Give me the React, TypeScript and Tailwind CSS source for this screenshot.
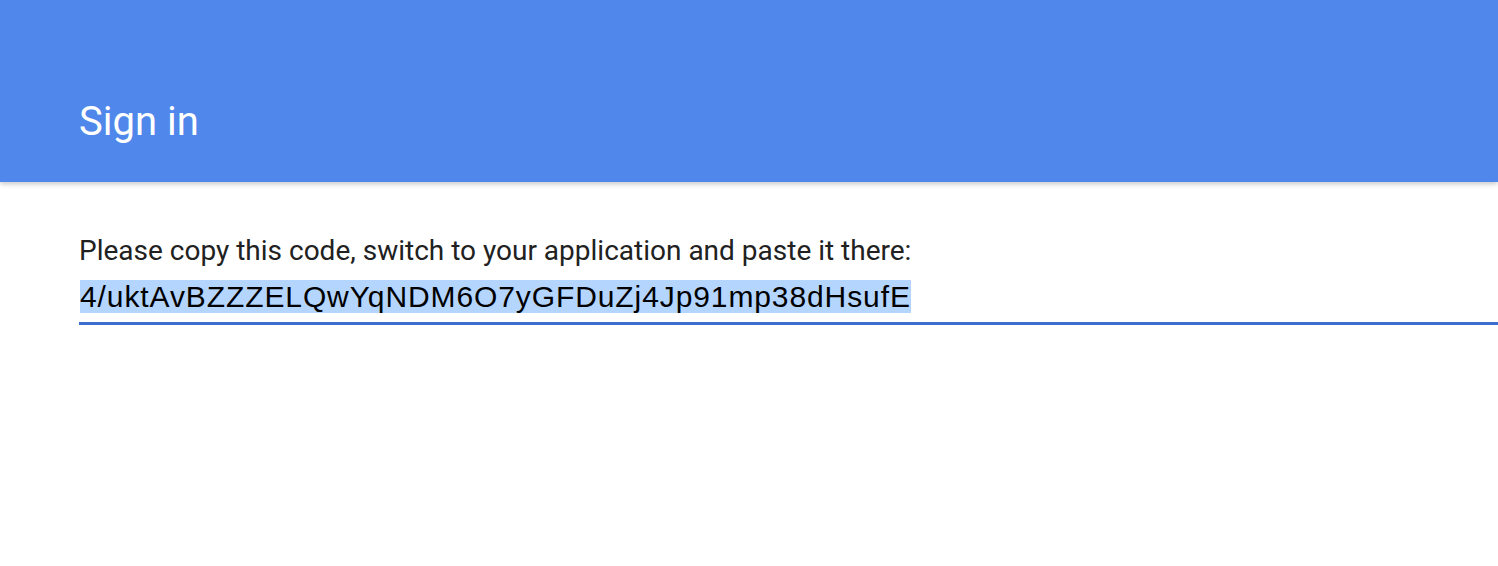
export default function App() {
  return (
    <div className="w-[1498px] h-[566px] bg-white overflow-hidden relative">
      <header className="relative z-10 h-[182px] bg-[#4f87eb] pl-[79px] pt-[102px] shadow-[0_2px_5px_rgba(0,0,0,0.22)]">
        <h1 className="text-white text-[40px] leading-[40px] font-normal" style={{ fontFamily: "Roboto, 'Noto Sans', sans-serif" }}>
          Sign in
        </h1>
      </header>
      <main className="pl-[79px] pt-[52px]">
        <p className="text-[#212121] text-[28px] leading-[33px]" style={{ fontFamily: "Roboto, 'Noto Sans', sans-serif" }}>
          Please copy this code, switch to your application and paste it there:
        </p>
        <div className="mt-[13px] border-b-[3px] border-[#3d6dcf] pb-[9px] pl-[1px]">
          <span className="bg-[#b4d5fe] text-black text-[30px] leading-[33px] tracking-[0.9px] inline-block align-top h-[33px]" style={{ fontFamily: "'Liberation Sans', Arial, sans-serif" }}>
            4/uktAvBZZZELQwYqNDM6O7yGFDuZj4Jp91mp38dHsufE
          </span>
        </div>
      </main>
    </div>
  );
}
